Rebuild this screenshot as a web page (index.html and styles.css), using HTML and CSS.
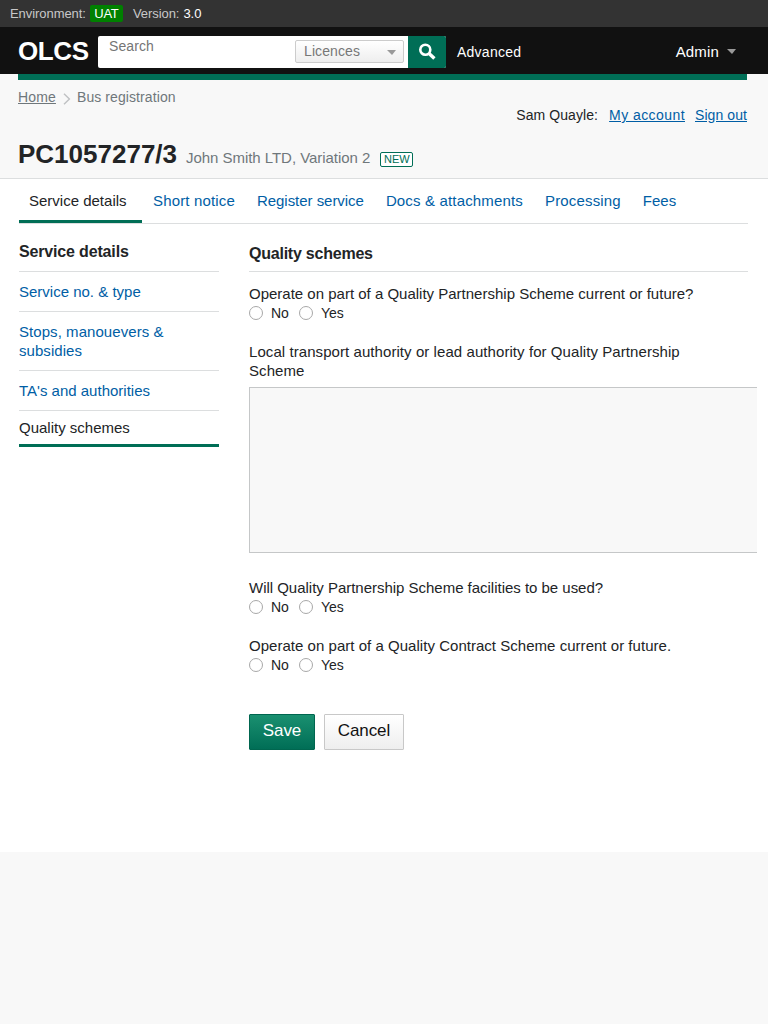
FILE: index.html
```html
<!DOCTYPE html>
<html lang="en">
<head>
<meta charset="utf-8">
<title>OLCS - Bus registration</title>
<link rel="stylesheet" href="styles.css">
</head>
<body>
<div class="env"><span class="env-label">Environment:</span><span class="env-tag">UAT</span><span class="env-label ver-label">Version:</span><span class="env-value">3.0</span></div>
<header class="top">
  <a class="logo">OLCS</a>
  <form class="search">
    <span class="search-input">Search</span>
    <span class="search-select"><span class="search-type">Licences</span><i class="caret"></i></span>
    <span class="search-btn"><svg width="18" height="18" viewBox="0 0 18 18"><circle cx="7.3" cy="6.7" r="5" fill="none" stroke="#fff" stroke-width="2.6"/><path d="M10.8 10.3L16.4 15.6" stroke="#fff" stroke-width="3.4"/></svg></span>
  </form>
  <a class="advanced">Advanced</a>
  <a class="admin"><span class="admin-label">Admin</span><i class="caret"></i></a>
</header>
<div class="page-head">
  <div class="green-bar"></div>
  <div class="head-row">
    <nav class="crumbs"><a class="home">Home</a><svg class="chev" width="8" height="12" viewBox="0 0 8 12"><path d="M1 .8L6.4 6L1 11.2" fill="none" stroke="#bfc1c3" stroke-width="1.4"/></svg><span class="crumb-current">Bus registration</span></nav>
    <div class="user"><span class="user-name">Sam Quayle:</span><a class="account">My account</a><a class="signout">Sign out</a></div>
  </div>
  <div class="title-row"><h1 class="title">PC1057277/3</h1><span class="subtitle">John Smith LTD, Variation 2</span><span class="status">NEW</span></div>
</div>
<main class="main">
  <nav class="tabs">
    <a class="tab active">Service details</a><a class="tab spaced">Short notice</a><a class="tab tight">Register service</a><a class="tab spaced">Docs &amp; attachments</a><a class="tab spaced">Processing</a><a class="tab">Fees</a>
  </nav>
  <div class="columns">
    <aside class="side">
      <h2 class="side-head">Service details</h2>
      <a class="side-link">Service no. &amp; type</a>
      <a class="side-link wide">Stops, manouevers &amp;<br>subsidies</a>
      <a class="side-link">TA's and authorities</a>
      <a class="side-link current">Quality schemes</a>
    </aside>
    <section class="content">
      <h2 class="content-head">Quality schemes</h2>
      <div class="field first"><p class="label">Operate on part of a Quality Partnership Scheme current or future?</p>
        <div class="radios"><i class="radio"></i><span class="opt">No</span><i class="radio"></i><span class="opt">Yes</span></div></div>
      <div class="field"><p class="label label-local">Local transport authority or lead authority for Quality Partnership<br>Scheme</p>
        <div class="area"></div></div>
      <div class="field after-area"><p class="label label-used">Will Quality Partnership Scheme facilities to be used?</p>
        <div class="radios"><i class="radio"></i><span class="opt">No</span><i class="radio"></i><span class="opt">Yes</span></div></div>
      <div class="field"><p class="label label-contract">Operate on part of a Quality Contract Scheme current or future.</p>
        <div class="radios"><i class="radio"></i><span class="opt">No</span><i class="radio"></i><span class="opt">Yes</span></div></div>
      <div class="actions"><a class="btn save">Save</a><a class="btn cancel">Cancel</a></div>
    </section>
  </div>
</main>
</body>
</html>
```
FILE: styles.css
```css
* { box-sizing: border-box; }
body { margin: 0; background: #f8f8f8; color: #222426; font: 15px/19px "Liberation Sans", Arial, sans-serif; }
h1, h2, p { margin: 0; }

.env { display: flex; align-items: center; height: 27px; padding-left: 10px; background: #333; color: #c8c8c8; font-size: 13px; }
.env-label { letter-spacing: -.06px; }
.env-tag { width: 33px; height: 17px; margin-left: 4px; border-radius: 2px; background: #008000; color: #fff; line-height: 17px; text-align: center; letter-spacing: -.3px; }
.ver-label { margin-left: 10px; }
.env-value { margin-left: 4px; color: #fff; }

.top { display: flex; height: 47px; padding: 9px 32px 6px 18px; background: #111; color: #fff; }
.logo { width: 80px; font-size: 26px; font-weight: bold; line-height: 30px; letter-spacing: -.4px; }
.search { display: flex; width: 348px; height: 32px; background: #fff; border-radius: 2px; overflow: hidden; }
.search-input { flex: 1; padding: 1px 0 0 11px; color: #757575; font-size: 14px; letter-spacing: .1px; }
.search-select { display: flex; align-items: center; justify-content: space-between; width: 109px; height: 23px; margin: 4px 4px 0 0; padding: 0 7px 0 8px; border: 1px solid #ccc; border-radius: 2px; background: linear-gradient(#fff, #eee); color: #777; font-size: 14px; }
.search-type { letter-spacing: .1px; }
.caret { width: 0; height: 0; border: solid transparent; border-width: 5px 4px 0 5px; border-top-color: #999; }
.search-select .caret { margin-top: 2px; }
.search-btn { display: flex; align-items: center; justify-content: center; width: 38px; background: #006e56; }
.advanced { margin-left: 11px; font-size: 14px; line-height: 32px; letter-spacing: .25px; }
.admin { display: flex; align-items: center; gap: 8px; height: 30px; margin-left: auto; line-height: 17px; }
.admin-label { letter-spacing: .15px; }

.page-head { height: 105px; padding: 0 21px 0 18px; border-bottom: 1px solid #dcdedf; }
.green-bar { height: 6px; background: #006e56; }
.head-row { display: flex; justify-content: space-between; height: 56px; padding-top: 8px; font-size: 14px; }
.crumbs { display: flex; color: #6f777b; }
.home { text-decoration: underline; letter-spacing: .15px; }
.chev { margin: 5px 6px 0 7px; }
.crumb-current { letter-spacing: .09px; }
.user { display: flex; padding-top: 18px; }
.user-name { letter-spacing: .08px; }
.account, .signout { margin-left: 10px; color: #005ea5; text-decoration: underline; }
.account { margin-left: 11px; letter-spacing: .43px; }
.signout { letter-spacing: .08px; }
.title-row { display: flex; align-items: baseline; }
.title { font-size: 26px; line-height: 36px; }
.subtitle { margin-left: 9px; color: #6f777b; letter-spacing: -.04px; }
.status { width: 33px; height: 15px; margin-left: 10px; border: 1px solid #006e56; border-radius: 2px; background: #fff; color: #006e56; font-size: 11px; line-height: 13px; text-align: center; }

.main { height: 673px; padding: 0 11px 0 19px; background: #fff; }
.tabs { display: flex; height: 45px; margin-right: 9px; border-bottom: 1px solid #dcdedf; }
.tab { padding: 12px 11px 0; color: #005ea5; }
.tab.spaced { letter-spacing: .16px; }
.tab.tight { letter-spacing: -.04px; }
.tab.active { width: 123px; height: 44px; padding-left: 10px; border-bottom: 3px solid #006e56; color: #222426; }

.columns { display: flex; gap: 30px; }
.side { width: 200px; }
.side-head, .content-head { height: 48px; padding-top: 18px; border-bottom: 1px solid #dcdedf; font-size: 16px; line-height: 20px; letter-spacing: -.16px; }
.content-head { margin-right: 9px; padding-top: 20px; letter-spacing: -.23px; }
.side-link { display: block; padding: 10px 0; border-bottom: 1px solid #dcdedf; color: #005ea5; }
.side-link.wide { letter-spacing: .06px; }
.side-link.current { height: 36px; padding: 7px 0 0; border-bottom: 3px solid #006e56; color: #222426; }

.content { flex: 1; min-width: 0; }
.field { margin-top: 20px; }
.field.first { margin-top: 12px; }
.field.after-area { margin-top: 25px; }
.label-local { letter-spacing: .07px; }
.label-used { letter-spacing: -.02px; }
.label-contract { letter-spacing: .03px; }
.radios { display: flex; align-items: center; height: 19px; font-size: 14px; }
.radio { width: 14px; height: 14px; margin-right: 8px; border: 1px solid #a8a8a8; border-radius: 50%; background: #fff; }
.opt { margin-top: 1px; margin-right: 10px; }
.area { height: 166px; margin-top: 7px; border: 1px solid #c5c7c8; border-right: 0; background: #f8f8f8; }
.actions { display: flex; gap: 9px; margin-top: 40px; }
.btn { height: 36px; border: 1px solid #c8c8c8; border-radius: 1px; background: linear-gradient(#fff, #eee); color: #111; font-size: 17px; line-height: 32px; text-align: center; letter-spacing: -.1px; }
.save { width: 66px; border-color: #00664f; background: linear-gradient(#1a9070, #006e56); color: #fff; }
.cancel { width: 80px; }
```
